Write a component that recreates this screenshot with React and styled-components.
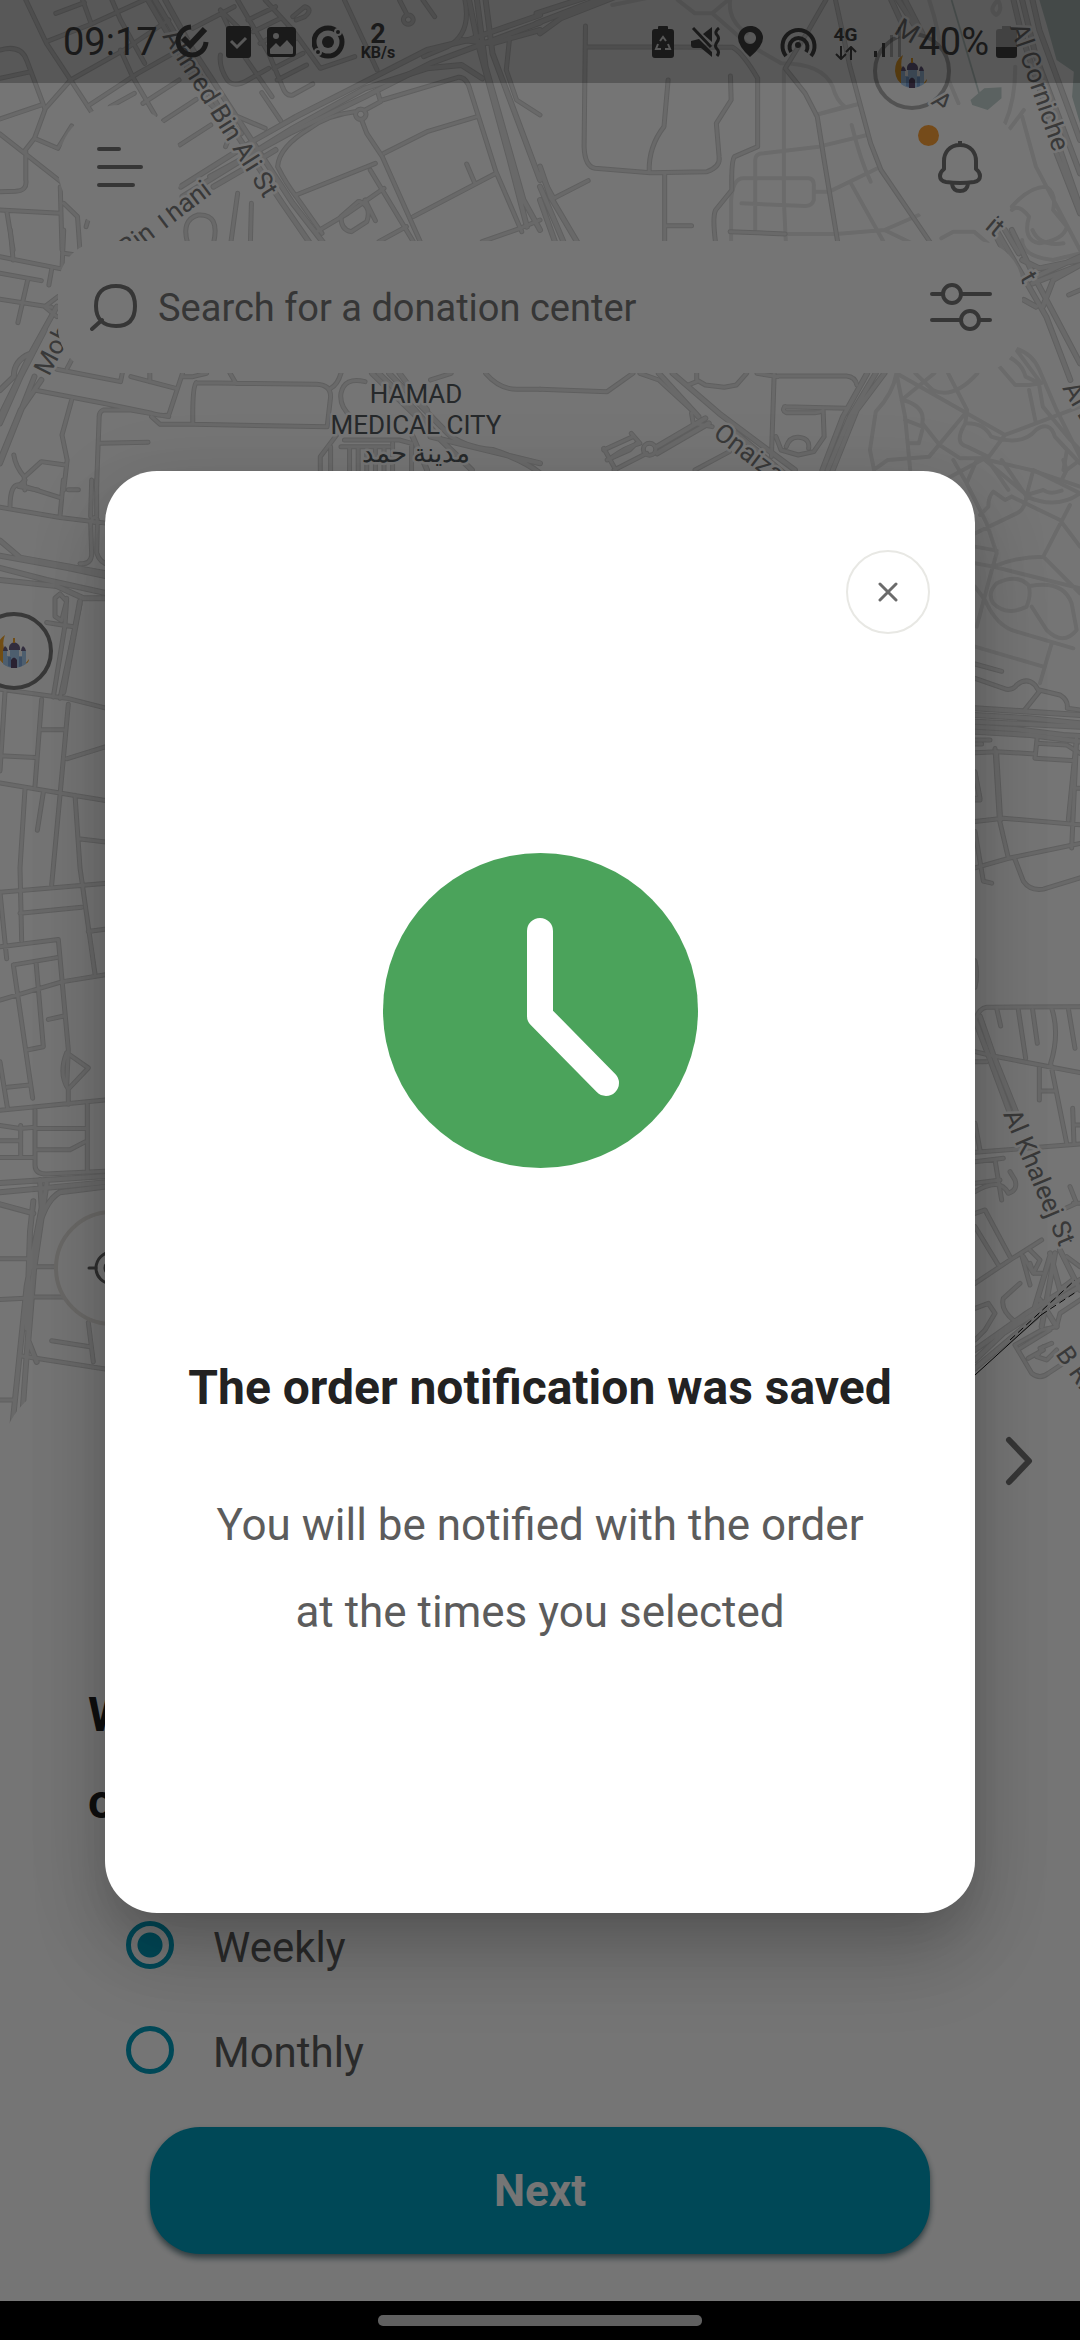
import React from "react";
import styled, { createGlobalStyle } from "styled-components";

const GlobalStyle = createGlobalStyle`
  * { box-sizing: border-box; }
  body { margin: 0; background: #000; font-family: Roboto, "Noto Sans", sans-serif; }
  button, input { font: inherit; }
`;

const Screen = styled.div`
  position: relative;
  display: flex;
  flex-direction: column;
  min-height: 100vh;
  background: #fff;
  overflow: hidden;
`;

/* ---------- map ---------- */

const MapCanvas = styled.svg`
  position: absolute;
  top: 0;
  left: 0;
  width: 100%;
  height: auto;
`;

const MapLabel = styled.text`
  font-family: Roboto, "Noto Sans", sans-serif;
  font-size: 26px;
  fill: ${(p) => (p.$strong ? "#535a5e" : "#7c7c7c")};
  stroke: #fff;
  stroke-width: 5px;
  paint-order: stroke;
  stroke-linejoin: round;
  text-anchor: ${(p) => (p.$strong ? "middle" : "start")};
`;

const topLeft = [
  "M75 0L135 130L205 240L265 335M0 150Q62 132 78 182L130 325M0 235L90 215M0 357L120 315M135 125L265 72L440 -10M240 0L265 72M162 40L245 8M325 0L350 60L420 190M205 240L360 150L490 60",
  "M255 318L400 220L520 150M350 150L385 230L450 345M205 240L132 325L100 415L70 455M0 402L180 548M75 455V540Q80 572 45 574L0 575M100 415L168 445L208 378M0 630L175 640M175 560L180 750M185 610L225 650L232 750M20 635L38 750",
  "M320 320L390 280M475 362L570 298M522 435L612 375M415 310L520 240M250 680L255 662",
  "M640 30L690 140L790 290M690 0L780 160L820 260Q830 290 850 285L908 252M560 85L680 20M640 30L700 90M770 0L850 90L930 205L1030 170M720 60L800 20M735 95L815 55M755 130L835 85M780 160L860 115M795 205L880 160M805 240L890 195M850 50L885 20Q910 28 885 50L860 60M640 165Q635 200 660 240Q680 265 720 240L780 205",
  "M1000 0L1095 210M1160 0L1180 40M1185 45a14 14 0 1 0 1 0M1228 0L1262 50M760 278L815 362M655 440L690 350L770 385",
  "M1095 270L1105 305L1060 330M1110 300L1330 232Q1355 230 1365 270L1440 515L1515 695M1047 328a15 15 0 1 0 1 0M1030 335Q950 345 900 385Q810 440 806 500Q830 550 860 590L935 700M1050 360L1065 400L1110 470L1220 725M1115 460L1240 395L1385 350M860 585L1090 490M920 695L1010 640L1115 565M1075 510L1200 725M1200 650L1440 520M1355 492L1378 548",
  "M1040 605L990 650Q990 690 1020 695L1065 665Q1080 620 1045 605M1060 600L1090 662M690 580L670 730M730 610L727 730M545 730Q525 660 575 645Q640 640 620 730M1400 725L1510 685L1568 660M1100 725L1180 680M1480 110L1470 210L1500 300L1568 345M1350 0Q1370 100 1300 140L1230 170",
];
const topLeftMain = [
  "M430 0L600 300L700 400M450 0L640 330L820 610L900 730M480 0L560 150L850 610L940 730",
  "M525 560L740 420L860 350L1060 245L1240 150L1360 120L1568 45M530 590L850 385L1060 265L1240 205L1340 195L1400 235",
  "M610 530L840 400L1060 290L1250 190L1568 68M620 560L720 500L800 450",
  "M1362 0L1385 120L1480 480L1530 680M1385 0L1410 200L1520 600L1568 690M1410 0L1430 160L1568 540M1340 120L1430 130L1568 90",
];
const topRight = [
  "M132 78L128 440Q130 500 160 505L320 518L485 515Q525 500 520 470L512 370L555 300L553 228M132 140L560 142Q590 160 632 235V440L565 470Q555 480 557 570L510 630Q500 650 510 730M372 240L360 380Q315 440 317 515M362 520V730M368 677H440M40 595L140 542M0 520L40 595",
  "M830 0L780 90L712 205L770 280L805 350L825 480L865 730M858 0L900 200L960 430L990 510L1135 730M552 695L712 702",
];
const topRightMain = ["M-10 40L170 -20M-10 70L190 -10M0 100L60 55L220 -10M0 500L30 590L110 730M0 560L70 730M0 600L45 730M1020 0L1060 90M1040 0L1090 80M1060 0L1110 100", "M1375 0L1400 110L1500 420L1568 620M1400 0L1440 170L1568 520M1430 0L1450 90L1568 420M1500 460L1568 640M1320 700L1350 760M1350 690L1390 760"];
const topRightPaths = [
  "M210 15L330 -10M400 0L450 40H500L552 -5M500 40L600 130L700 190Q820 190 850 260Q860 300 885 320L800 345L925 312M708 210V600L714 730M625 690V480Q625 460 650 460L810 440L950 405M555 730V600Q560 535 590 535H780Q797 537 795 560V600Q790 618 770 618L585 610M800 575L840 575L980 505M905 375Q930 480 960 545M900 545L1000 730M710 702L860 702L1000 690L1100 645M1000 690L1080 730M552 0Q545 60 600 100",
  "M1130 0Q1160 90 1170 200L1215 310M1330 0Q1300 30 1325 45Q1345 30 1330 0M1380 200Q1380 300 1350 370M1405 330L1365 385M1400 350L1440 500L1568 750M1370 620Q1420 560 1470 560Q1500 580 1490 630L1530 680Q1520 720 1450 730Q1400 720 1420 650Q1390 610 1370 630M1165 715L1200 695H1260L1300 730",
];
const midLeft = [
  "M0 80L185 118M30 0L38 90M185 0L180 115M150 118L142 165M0 130L120 152M80 152L52 278M0 208L150 232M185 70L220 75M130 230L168 200M132 232L165 260M165 418L350 455L355 430M212 382L195 415M380 440L510 475M435 430V455M530 430L490 555Q470 560 440 550L300 520L100 480M490 560L380 540L300 540Q288 545 288 560L280 780M208 510L180 615L195 690L185 780M290 640L430 637M40 675Q45 710 70 740L72 780M72 740L120 695L190 705M55 770L110 780",
  "M668 430L685 460M570 458L920 463Q960 465 960 500L950 590L560 583L465 583L440 560M570 458Q558 470 560 583M530 440H560L600 430M990 430Q980 465 960 475M1060 455Q1000 440 990 490Q985 530 1020 560M1010 570L930 680V730M1000 630L1160 630L1195 640V725M960 650V725M990 650H1130M1015 655V725M1040 655V725M1065 655V725M1090 655V725M1115 655V725M1140 640V725M1410 430Q1450 478 1500 478H1568M1250 450L1310 430",
];
const midLeftMain = ["M165 230L90 370L0 560M130 300L60 440L0 580M100 440L0 700M120 450L60 540L0 690M90 370Q40 390 40 440L0 480", "M1080 430L1250 600L1370 720M1100 430L1180 510L1290 640M1130 430L1300 610Q1340 650 1430 660Q1520 690 1568 730M1160 430L1240 540M1250 620L1568 700M1190 600L1240 720"];
const midRight = [
  "M0 478L195 485L270 430M290 430L345 450L440 540M455 430V455L430 465M455 450L480 465L535 472L570 465L600 430M680 430L672 680M690 438H890Q915 440 920 465M710 530L890 535M712 530Q700 540 715 548H800Q820 545 822 540L825 620L795 665L750 675L700 660L685 620M715 650Q725 620 750 622Q785 625 780 655M300 658a18 18 0 1 0 36 0a18 18 0 1 0-36 0M265 610L290 640Q250 650 205 685M185 655L220 720M185 660L270 620M215 720L310 670M195 690L260 660L280 640M450 720L550 665M440 550L445 580L500 590M630 430L690 440M1535 195L1568 180",
];
const midRightMain = ["M345 430L460 560M385 430L520 550M340 670L490 580M340 650L480 565M520 550L740 720M570 610L720 740M950 430L880 560L820 720M975 430L900 560L835 720M1000 430L920 540L850 720", "M1325 0L1470 260L1540 450M1370 0L1440 150L1568 400M1440 140L1568 80M1430 160L1568 105M1400 90L1450 115L1568 90M1460 230L1490 150L1568 105M1405 210L1440 230"];
const midRightPaths = ["M1035 430Q1025 490 975 545L958 660L970 720M1035 430L1060 560L1075 720M1035 430L1350 615L1568 530M1050 510L1145 430M1090 430L1140 480Q1200 510 1270 430M1185 430L1240 540L1235 580Q1200 640 1240 650L1300 680L1120 780M1055 510Q1120 530 1110 580L1160 645L1220 685H1300L1350 615M1060 570L1110 590M1070 640H1100L1110 600M975 715L1010 690L1130 680L1235 550M1240 580Q1290 580 1310 620Q1400 650 1440 600Q1480 570 1495 620L1568 700M1330 405L1380 465H1420L1455 460L1380 355M1360 380Q1400 400 1410 440L1450 460M1420 480L1440 580M1450 470L1460 530L1540 630L1568 660M1300 690L1360 780M1300 690L1425 720L1568 770M1380 355Q1430 370 1450 420L1500 540L1568 680M1495 620L1530 660L1520 720M1400 30Q1400 80 1490 90L1568 70M1430 0Q1450 50 1520 40"];
const leftStrip = [
  "M0 45L180 62L330 72M30 45Q30 5 60 8L185 30M75 0L60 8M190 0L180 60M205 16H235M275 0L272 60M290 0V60M276 66a8 4 0 1 0 16 0a8 4 0 1 0-16 0M272 70L275 125Q270 140 240 138M292 70L290 120Q300 138 330 140M165 195L180 188L200 200L185 232L165 225ZM200 195L195 240L160 358M240 205L180 360M140 235L220 242M0 345L200 360L330 378M125 362L105 505M205 370L180 520L155 668M120 412H190M0 455L105 458M15 350L0 480M200 460L330 438M0 500L220 520L330 530M75 510L60 640L65 760M130 515L112 578M225 520L240 640L285 815M0 680L330 665M60 715L245 705M235 592L330 598M265 745L330 740",
  "M0 680L20 790M0 770L175 758L205 940L200 1000M40 800L170 788M40 800L98 1020M108 795L130 935L85 940M0 858L185 828L330 815M145 890L195 884M0 960L22 1035M22 1002L90 998M0 1040L330 1022M0 1065L60 1070L105 1068M0 1090L60 1090M62 1065V1115M0 1118H105M105 1040V1130Q105 1145 140 1145L330 1140M110 1070H260M110 1105L210 1105L255 1092M262 1030V1140M200 945L265 970L205 1005Q175 980 200 945M205 1005V1030M0 1285L90 1285M0 1352L75 1350M100 1298H165M95 1348L190 1348M155 1420L270 1430M265 1390L280 1455M60 1445L330 1468M0 1518H40",
];
const leftStripMain = ["M0 100L60 128L330 155M0 125L200 145L330 160M0 145L140 165L330 188M0 165L170 175L250 195L330 195M240 200L190 350", "M0 1160L330 1148M0 1175L330 1158M120 1155L125 1200L80 1330L38 1555M140 1160L95 1330L68 1535M100 1190L90 1240L80 1400M0 1195L100 1210M330 1165L180 1175Q130 1190 110 1250L85 1420L110 1455"];
const rightTop = [
  "M435 612L515 634M435 655L530 688Q550 690 560 675Q590 650 615 675L628 695L580 755M628 690L690 705Q715 720 712 745L750 750M435 840H480M435 852H455M435 878L500 875L615 882M622 830L615 895L735 902M620 850L710 855L750 880M500 880L512 1080M740 830L715 1080M735 985H750M435 940L450 1020H435",
];
const rightTopMain = ["M435 745L600 755L750 765M435 765L600 775L750 790M435 785L750 800M435 800L560 808L700 825L750 828M435 815L600 825L750 845"];
const rightTopPaths = ["M370 0L410 70L470 190L500 280L480 350L440 500M410 70L440 0M465 0L590 105L640 90Q660 105 695 92M515 0L590 110Q680 150 750 100M610 30L590 105Q585 150 560 160L435 220M545 110L525 120L490 95Q475 110 475 140L450 165M545 110L690 180L750 260M720 135L640 290L750 400M640 290Q560 290 490 320L435 310M490 320L750 385M435 260L500 272M500 370Q560 340 595 375Q605 400 590 440Q530 470 490 430Q470 400 500 370M600 378Q700 360 725 430L740 510Q700 560 650 510L605 440M435 380L465 420Q500 500 560 515L730 565M435 560L640 620M665 550L630 670M610 30L750 100M710 30L695 60M700 0L710 30L750 0"];
const rightMid = ["M105 405L118 512L145 570M45 515L130 510L360 520M350 390L335 555M45 585L150 570L360 548M165 572L190 605Q210 620 250 617L360 600M45 440L60 480H45M45 530L70 605L95 608M45 725Q55 745 45 765"];
const rightBottom = ["M45 125Q55 85 80 82L360 80M110 85L122 138M175 90L197 235M218 90L232 190M275 85Q300 160 272 250L320 490M325 85L345 205M45 215L100 228L360 278M45 245H80M238 255V360M240 333H285M338 385L342 490M340 435H360M45 517L360 492M45 430L60 510M45 545L130 535M105 540L125 660M45 610L120 600M45 635Q120 590 145 640Q175 630 165 600L150 575M45 700L75 690L150 830M45 740L115 855M45 910L150 840L245 780M45 985L85 970L105 1000L75 1050L45 1080M185 825L210 915M210 810L240 840L220 880L190 830M245 880H220L210 850M180 910L130 955Q120 990 165 1025M165 1095L215 1180Q240 1200 265 1180L310 1150M165 1095L245 1050L290 1040M180 1105L270 1050M205 1135L250 1110M250 1100L230 1130L260 1140L290 1110M240 1105L275 1090M330 620L350 670L305 690M360 670H340M360 960L300 1000L290 1040M320 830L360 860"];
const rightBottomMain = ["M45 120L85 225L150 400M60 110L100 225L170 400M45 1140L130 1060L240 990L360 920M45 1110L200 1000L360 900M45 1165L230 1010M245 1040L260 960L285 820M225 980L270 830M300 810L360 930M270 820L300 930L340 900M290 1040L240 960"];

const frames = {
  top: "scale(.3444 .3333)",
  topRight: "translate(540 0) scale(.3444 .3333)",
  mid: "translate(0 230) scale(.3444 .3333)",
  midRight: "translate(540 230) scale(.3444 .3333)",
  left: "translate(0 480) scale(.3333 .6061)",
  rightTop: "translate(830 460) scale(.3333)",
  rightMid: "translate(960 480) scale(.3333 .6631)",
  rightBottom: "translate(960 980) scale(.3333)",
};

const roads = [
  [frames.top, topLeft, 5],
  [frames.topRight, topRight, 5],
  [frames.mid, midLeft, 5],
  [frames.midRight, midRight, 5],
  [frames.left, leftStrip, 5],
  [frames.rightTop, rightTop, 5],
  [frames.rightMid, rightMid, 5],
  [frames.rightBottom, rightBottom, 5],
  [frames.top, topLeftMain, 6],
  [frames.topRight, topRightMain, 6],
  [frames.mid, midLeftMain, 6],
  [frames.midRight, midRightMain, 6],
  [frames.left, leftStripMain, 6],
  [frames.rightTop, rightTopMain, 6],
  [frames.rightBottom, rightBottomMain, 6],
];
const footpaths = [
  [frames.topRight, topRightPaths],
  [frames.midRight, midRightPaths],
  [frames.rightTop, rightTopPaths],
];

function Strokes({ frame, paths, color, width }) {
  return (
    <g transform={frame} fill="none" stroke={color} strokeWidth={width} strokeLinecap="round" strokeLinejoin="round">
      {paths.map((d) => (
        <path key={d} d={d} vectorEffect="non-scaling-stroke" />
      ))}
    </g>
  );
}

function MosquePin({ x, y, ring }) {
  return (
    <g transform={`translate(${x} ${y})`}>
      <circle r="37" fill="#fff" stroke={ring} strokeWidth="4" />
      <path d="M-9 -16Q-17 -11 -17 0Q-16 11 -8 14L-8 2Q-13 -6 -9 -16Z" fill="#f6a92d" />
      <path d="M11 13L15 8Q15 12 11 13Z" fill="#f6a92d" />
      <path d="M-11 13V0H-7V5H-4V-1H5V5H8V0H12V13Q6 17 0 17T-11 13Z" fill="#a9cdf0" />
      <path d="M-6 6H-3V16L-6 15ZM5 6H8V15L5 16Z" fill="#7ea9dc" />
      <path d="M-5 -1Q-6 -7 0 -9Q7 -7 6 -1ZM-11 0Q-11 -3 -9 -5Q-6 -3 -6 0ZM7 0Q7 -3 9 -5Q12 -3 12 0Z" fill="#6e6288" />
      <path d="M-3 17V9Q0 4 3 9V17Z" fill="#5d4a6b" />
      <path d="M0 -8V-13" stroke="#f6a92d" strokeWidth="2" />
    </g>
  );
}

function CityMap() {
  return (
    <MapCanvas viewBox="0 0 1080 1440" aria-hidden="true">
      <g transform={frames.topRight} fill="#c6d6d3">
        <path d="M1450 0H1568V370L1545 290L1550 215L1500 180L1470 70Z" />
        <path d="M1250 300L1290 265L1340 262L1340 295L1300 330L1255 315Z" />
        <path d="M1195 0L1275 280" stroke="#c6d6d3" strokeWidth="5" />
      </g>
      {footpaths.map(([frame, paths]) => (
        <Strokes key={frame} frame={frame} paths={paths} color="#e9e9e9" width={4} />
      ))}
      {roads.map(([frame, paths, w]) => (
        <Strokes key={frame + w} frame={frame} paths={paths} color="#d0d0d0" width={w} />
      ))}
      {roads.map(([frame, paths, w]) => (
        <Strokes key={frame + w} frame={frame} paths={paths} color="#e4e4e4" width={w - 2} />
      ))}
      <path d="M975 1375L1041 1315" stroke="#111" strokeWidth="1" />
      <path d="M1010 1340L1075 1280M1041 1315L1076 1292" stroke="#111" strokeWidth="1" strokeDasharray="7 4" />
      <MosquePin x={912} y={71} ring="#b4b4b4" />
      <MosquePin x={14} y={651} ring="#7c7c7c" />
      <MapLabel transform="translate(162 36) rotate(58)">Ahmed Bin Ali St</MapLabel>
      <MapLabel transform="translate(127 258) rotate(-37)">Bin Thani</MapLabel>
      <MapLabel transform="translate(49 377) rotate(-63)">Moh</MapLabel>
      <MapLabel transform="translate(712 436) rotate(37)">Onaiza</MapLabel>
      <MapLabel transform="translate(1010 27) rotate(71)">Al Corniche</MapLabel>
      <MapLabel transform="translate(1062 388) rotate(60)">Al D</MapLabel>
      <MapLabel transform="translate(1003 1114) rotate(67)">Al Khaleej St</MapLabel>
      <MapLabel transform="translate(1055 1354) rotate(55)">B Ri</MapLabel>
      <MapLabel transform="translate(893 33) rotate(30)">M</MapLabel>
      <MapLabel transform="translate(930 103) rotate(40)">A</MapLabel>
      <MapLabel transform="translate(984 228) rotate(40)">it</MapLabel>
      <MapLabel transform="translate(1019 278) rotate(60)">t</MapLabel>
      <MapLabel $strong x="416" y="403">HAMAD</MapLabel>
      <MapLabel $strong x="416" y="434">MEDICAL CITY</MapLabel>
      <MapLabel $strong x="416" y="462">مدينة حمد</MapLabel>
    </MapCanvas>
  );
}

/* ---------- status bar ---------- */

const StatusBar = styled.header`
  position: relative;
  display: flex;
  align-items: center;
  justify-content: space-between;
  height: 83px;
  padding: 0 63px;
  background: rgba(0, 0, 0, 0.25);
  color: #3a3a3a;
`;

const StatusGroup = styled.div`
  display: flex;
  align-items: center;
  gap: ${(p) => p.$gap || 17}px;
`;

const StatusText = styled.span`
  font-size: 38px;
  line-height: 44px;
`;

const StackedText = styled.span`
  display: flex;
  flex-direction: column;
  align-items: center;
  font-weight: 700;
  font-size: 16px;
  line-height: 16px;
`;

const StackedTop = styled.span`
  font-size: ${(p) => p.$size}px;
  line-height: 22px;
`;

function StatusIcons() {
  return (
    <StatusBar>
      <StatusGroup $gap={16}>
        <StatusText>09:17</StatusText>
        <svg width="36" height="36" viewBox="0 0 36 36" fill="none" stroke="currentColor">
          <path d="M17 3A14 14 0 1 0 32 18" strokeWidth="5" />
          <path d="M9 14L16 21L31 5" strokeWidth="6" />
        </svg>
        <svg width="25" height="32" viewBox="0 0 25 32">
          <rect width="25" height="32" rx="3" fill="currentColor" />
          <path d="M5 15L11 21L20 12" fill="none" stroke="#bfbfbf" strokeWidth="3" />
        </svg>
        <svg width="29" height="30" viewBox="0 0 29 30">
          <rect width="29" height="30" rx="4" fill="currentColor" />
          <circle cx="9" cy="9" r="3" fill="#bfbfbf" />
          <path d="M3 22L9 16L13 20L20 13L26 20V26Q26 27 25 27H4Q3 27 3 26Z" fill="#bfbfbf" />
        </svg>
        <svg width="33" height="34" viewBox="0 0 33 34" fill="none" stroke="currentColor">
          <circle cx="16" cy="17" r="14" strokeWidth="5" />
          <circle cx="16" cy="17" r="6" fill="currentColor" stroke="none" />
          <circle cx="26" cy="7" r="3" fill="currentColor" stroke="#bfbfbf" strokeWidth="2" />
          <circle cx="6" cy="27" r="3" fill="currentColor" stroke="#bfbfbf" strokeWidth="2" />
        </svg>
        <StackedText>
          <StackedTop $size={27}>2</StackedTop>
          KB/s
        </StackedText>
      </StatusGroup>
      <StatusGroup>
        <svg width="22" height="32" viewBox="0 0 22 32">
          <path d="M6 3V1Q6 0 7 0H15Q16 0 16 1V3H19Q22 3 22 6V29Q22 32 19 32H3Q0 32 0 29V6Q0 3 3 3Z" fill="currentColor" />
          <path d="M8 15L11 11L14 15M16 18L18 23H13M9 23H4L6 18" fill="none" stroke="#bfbfbf" strokeWidth="2" />
        </svg>
        <svg width="30" height="30" viewBox="0 0 30 30" fill="none" stroke="currentColor">
          <path d="M12 7L21 0V15ZM0 14L8 12L21 25V30L10 21H3Q0 21 0 18Z" fill="currentColor" stroke="none" />
          <path d="M2 1L20 20" strokeWidth="3" />
          <path d="M28 1Q23 5 26 8T26 15T26 22T26 29" strokeWidth="3" />
        </svg>
        <svg width="25" height="31" viewBox="0 0 25 31">
          <path fillRule="evenodd" d="M12 0A12 12 0 0 1 25 12Q25 20 12 31Q0 20 0 12A12 12 0 0 1 12 0ZM12 6A6 6 0 1 0 12.1 6Z" fill="currentColor" />
        </svg>
        <svg width="37" height="32" viewBox="0 0 37 32" fill="none" stroke="currentColor" strokeWidth="4">
          <path d="M6 30A16 16 0 1 1 31 30" />
          <path d="M11 26A9 9 0 1 1 26 26" />
          <circle cx="18" cy="19" r="3" fill="currentColor" stroke="none" />
        </svg>
        <StackedText>
          <StackedTop $size={19}>4G</StackedTop>
          <svg width="22" height="14" viewBox="0 0 22 14" fill="none" stroke="currentColor" strokeWidth="2">
            <path d="M6 0V12M1 8L6 13L11 8M16 14V2M11 6L16 1L21 6" />
          </svg>
        </StackedText>
        <svg width="27" height="30" viewBox="0 0 27 30" fill="currentColor">
          <rect y="24" width="3" height="6" />
          <rect x="8" y="16" width="3" height="14" />
          <rect x="16" y="8" width="3" height="22" opacity=".35" />
          <rect x="24" width="3" height="30" opacity=".35" />
        </svg>
        <StatusGroup $gap={7}>
          <StatusText>40%</StatusText>
          <svg width="21" height="32" viewBox="0 0 21 32" fill="currentColor">
            <path d="M6 3V0H15V3H18Q21 3 21 6V21H0V6Q0 3 3 3Z" opacity=".35" />
            <path d="M0 21H21V29Q21 32 18 32H3Q0 32 0 29Z" />
          </svg>
        </StatusGroup>
      </StatusGroup>
    </StatusBar>
  );
}

/* ---------- page ---------- */

const TopControls = styled.nav`
  position: relative;
  display: flex;
  justify-content: space-between;
  padding: 22px 58px 12px;
`;

const RoundButton = styled.button`
  position: relative;
  display: grid;
  place-items: center;
  width: ${(p) => p.$size}px;
  height: ${(p) => p.$size}px;
  padding: 0;
  border: ${(p) => p.$border || "none"};
  border-radius: 50%;
  background: #fff;
  color: ${(p) => p.$color || "#777"};
`;

const AlertDot = styled.span`
  position: absolute;
  top: 20px;
  left: 20px;
  width: 21px;
  height: 21px;
  border-radius: 50%;
  background: #ffa33a;
`;

const SearchBar = styled.label`
  position: relative;
  display: flex;
  align-items: center;
  gap: 21px;
  height: 132px;
  margin: 0 58px;
  padding: 0 30px 0 32px;
  border-radius: 46px;
  background: #fff;
  color: #777;
`;

const SearchInput = styled.input`
  flex: 1;
  min-width: 0;
  padding: 2px 0 0;
  border: 0;
  outline: 0;
  background: transparent;
  font-size: 38px;
  line-height: 48px;
  color: #777;
  &::placeholder { color: #777; opacity: 1; }
`;

const IconButton = styled.button`
  display: grid;
  place-items: center;
  padding: 0;
  border: 0;
  background: transparent;
  color: #777;
`;

const MapControls = styled.div`
  position: relative;
  flex: 1;
  display: flex;
  align-items: flex-end;
  padding: 0 54px 52px;
`;

const Sheet = styled.main`
  position: relative;
  display: flex;
  flex-direction: column;
  padding: 48px 47px 47px;
  border-radius: 84px 84px 0 0;
  background: #fff;
`;

const StepRow = styled.div`
  display: flex;
  justify-content: flex-end;
  height: 70px;
  margin-bottom: 175px;
`;

const Question = styled.h1`
  margin: 0 41px 47px;
  font-size: 48px;
  font-weight: 700;
  line-height: 87px;
  color: #222;
`;

const Options = styled.fieldset`
  margin: 0 79px 25px;
  padding: 0;
  border: 0;
`;

const Option = styled.label`
  display: flex;
  align-items: center;
  gap: 39px;
  height: 105px;
`;

const OptionText = styled.span`
  padding-top: 6px;
  font-size: 42px;
  line-height: 48px;
  color: #5c5c5c;
`;

const Radio = styled.input`
  appearance: none;
  width: 48px;
  height: 48px;
  margin: 0;
  border: 5px solid #009dbd;
  border-radius: 50%;
  &:checked { background: radial-gradient(circle, #009dbd 12px, transparent 13px); }
`;

const NextButton = styled.button`
  height: 127px;
  margin: 0 103px;
  border: 0;
  border-radius: 50px;
  background: #009dbd;
  box-shadow: 0 4px 6px rgba(0, 50, 62, 0.6);
  color: #fff;
  font-size: 44px;
  font-weight: 700;
`;

const GestureBar = styled.footer`
  display: flex;
  align-items: center;
  justify-content: center;
  height: 39px;
  background: #000;
`;

const GestureHandle = styled.span`
  width: 30%;
  height: 11px;
  border-radius: 5px;
  background: #d1d1d1;
`;

/* ---------- dialog ---------- */

const Scrim = styled.div`
  position: absolute;
  inset: 0;
  display: flex;
  align-items: center;
  padding: 83px 105px 39px;
  background: rgba(0, 0, 0, 0.54);
`;

const Dialog = styled.section`
  flex: 1;
  display: flex;
  flex-direction: column;
  align-items: center;
  padding: 79px 45px 257px;
  border-radius: 52px;
  background: #fff;
  box-shadow:
    0 20px 40px -16px rgba(0, 0, 0, 0.14),
    0 48px 80px 0 rgba(0, 0, 0, 0.14),
    0 16px 80px 4px rgba(0, 0, 0, 0.1);
  text-align: center;
`;

const DialogActions = styled.div`
  align-self: stretch;
  display: flex;
  justify-content: flex-end;
  margin-bottom: 219px;
`;

const ClockIcon = styled.svg`
  width: 315px;
  height: 315px;
  margin-bottom: 176px;
`;

const DialogTitle = styled.h2`
  margin: 0 0 51px;
  font-size: 48px;
  font-weight: 700;
  line-height: 87px;
  color: #222;
`;

const DialogText = styled.p`
  max-width: 680px;
  margin: 0;
  font-size: 44px;
  line-height: 87px;
  color: #5c5c5c;
`;

export default function App() {
  return (
    <Screen>
      <GlobalStyle />
      <CityMap />
      <StatusIcons />
      <TopControls>
        <RoundButton $size={124} aria-label="Menu">
          <svg width="46" height="42" viewBox="0 0 46 42" fill="none" stroke="currentColor" strokeWidth="4" strokeLinecap="round">
            <path d="M2 3H22M2 21H44M2 39H36" />
          </svg>
        </RoundButton>
        <RoundButton $size={124} aria-label="Notifications">
          <svg width="44" height="52" viewBox="0 0 44 52" fill="none" stroke="currentColor" strokeWidth="4" strokeLinejoin="round">
            <path d="M22 0V3M22 4C11 4 6 12 6 20V28Q2 31 2 35Q2 40 8 41Q22 43 36 41Q42 40 42 35Q42 31 38 28V20C38 12 33 4 22 4Z" />
            <path d="M14 43Q15 50 22 50T30 43" />
          </svg>
          <AlertDot />
        </RoundButton>
      </TopControls>
      <SearchBar>
        <svg width="47" height="48" viewBox="0 0 47 48" fill="none" stroke="currentColor" strokeWidth="4" strokeLinecap="round">
          <path d="M26 3C39 3 45 10 45 23C45 36 39 43 26 43C13 43 6 36 6 23C6 10 13 3 26 3Z" />
          <path d="M12 37L2 46" />
        </svg>
        <SearchInput type="text" placeholder="Search for a donation center" aria-label="Search for a donation center" />
        <IconButton aria-label="Filters">
          <svg width="62" height="50" viewBox="0 0 62 50" fill="none" stroke="currentColor" strokeWidth="4" strokeLinecap="round">
            <path d="M2 12H12M32 12H60M2 38H30M50 38H60" />
            <circle cx="22" cy="12" r="9" />
            <circle cx="40" cy="38" r="9" />
          </svg>
        </IconButton>
      </SearchBar>
      <MapControls>
        <RoundButton $size={116} $border="4px solid #e8e4e0" $color="#666" aria-label="My location">
          <svg width="50" height="50" viewBox="0 0 50 50" fill="none" stroke="currentColor" strokeWidth="3" strokeLinecap="round">
            <circle cx="25" cy="25" r="16" />
            <circle cx="25" cy="25" r="7" fill="currentColor" />
            <path d="M2 25H9M41 25H48M25 2V9M25 41V48" />
          </svg>
        </RoundButton>
      </MapControls>
      <Sheet>
        <StepRow>
          <IconButton aria-label="Forward">
            <svg width="28" height="50" viewBox="0 0 28 50" fill="none" stroke="currentColor" strokeWidth="6" strokeLinecap="round" strokeLinejoin="round">
              <path d="M4 4L24 25L4 46" />
            </svg>
          </IconButton>
        </StepRow>
        <Question>
          W
          <br />o
        </Question>
        <Options>
          <Option>
            <Radio type="radio" name="frequency" defaultChecked />
            <OptionText>Weekly</OptionText>
          </Option>
          <Option>
            <Radio type="radio" name="frequency" />
            <OptionText>Monthly</OptionText>
          </Option>
        </Options>
        <NextButton>Next</NextButton>
      </Sheet>
      <GestureBar>
        <GestureHandle />
      </GestureBar>
      <Scrim>
        <Dialog role="dialog" aria-modal="true" aria-labelledby="dialog-title">
          <DialogActions>
            <RoundButton $size={84} $border="2px solid #e8e8e4" $color="#6b6b6b" aria-label="Close">
              <svg width="20" height="20" viewBox="0 0 20 20" fill="none" stroke="currentColor" strokeWidth="3" strokeLinecap="round">
                <path d="M2 2L18 18M18 2L2 18" />
              </svg>
            </RoundButton>
          </DialogActions>
          <ClockIcon viewBox="0 0 315 315" aria-hidden="true">
            <circle cx="157.5" cy="157.5" r="157.5" fill="#4ba35b" />
            <path d="M157 78V163L223 230" fill="none" stroke="#fff" strokeWidth="26" strokeLinecap="round" strokeLinejoin="round" />
          </ClockIcon>
          <DialogTitle id="dialog-title">The order notification was saved</DialogTitle>
          <DialogText>You will be notified with the order at the times you selected</DialogText>
        </Dialog>
      </Scrim>
    </Screen>
  );
}
